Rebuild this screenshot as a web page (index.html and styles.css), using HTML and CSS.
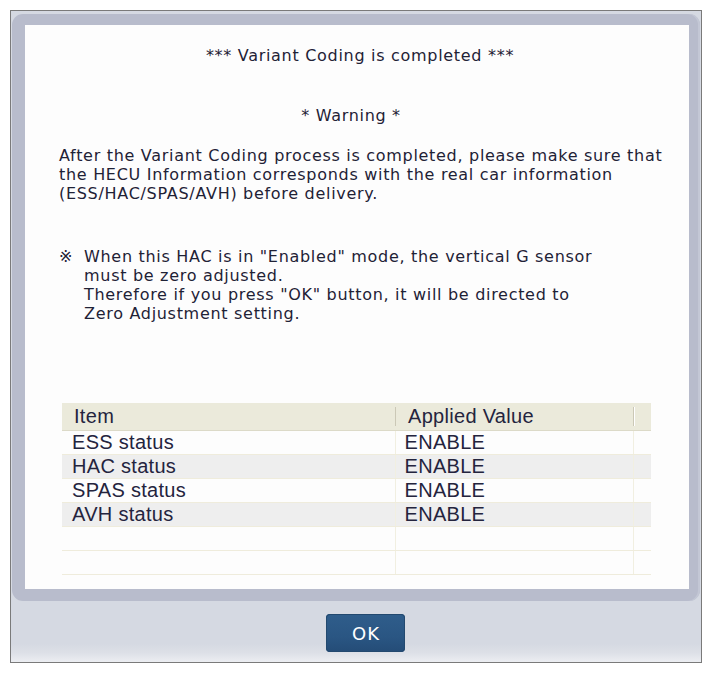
FILE: index.html
```html
<!DOCTYPE html>
<html>
<head>
<meta charset="utf-8">
<link rel="stylesheet" href="styles.css">
</head>
<body>
<div class="dialog">
  <div class="frame">
    <div class="panel">
      <div class="title">*** Variant Coding is completed ***</div>
      <div class="warning">* Warning *</div>
      <p class="para">After the Variant Coding process is completed, please make sure that<br>the HECU Information corresponds with the real car information<br>(ESS/HAC/SPAS/AVH) before delivery.</p>
      <div class="note">
        <span class="mark">※</span>
        <div class="note-text">When this HAC is in "Enabled" mode, the vertical G sensor<br>must be zero adjusted.<br>Therefore if you press "OK" button, it will be directed to<br>Zero Adjustment setting.</div>
      </div>
      <table class="grid">
        <colgroup><col class="w1"><col class="w2"><col class="w3"></colgroup>
        <thead>
          <tr><th class="c1">Item</th><th class="c2">Applied Value</th><th class="c3"></th></tr>
        </thead>
        <tbody>
          <tr><td class="c1">ESS status</td><td class="c2">ENABLE</td><td class="c3"></td></tr>
          <tr class="alt"><td class="c1">HAC status</td><td class="c2">ENABLE</td><td class="c3"></td></tr>
          <tr><td class="c1">SPAS status</td><td class="c2">ENABLE</td><td class="c3"></td></tr>
          <tr class="alt"><td class="c1">AVH status</td><td class="c2">ENABLE</td><td class="c3"></td></tr>
          <tr><td class="c1"></td><td class="c2"></td><td class="c3"></td></tr>
          <tr><td class="c1"></td><td class="c2"></td><td class="c3"></td></tr>
        </tbody>
      </table>
    </div>
  </div>
  <div class="footer">
    <button class="ok">OK</button>
  </div>
</div>
</body>
</html>
```

FILE: styles.css
```css
html, body {
  margin: 0;
  padding: 0;
  background: #ffffff;
}
.dialog {
  margin: 10px 0 0 10px;
  width: 690px;
  height: 651px;
  border: 1px solid #7a7a7a;
  background: #d5d9e2;
  display: flex;
  flex-direction: column;
}
.frame {
  margin: 3px 1px 0 1px;
  height: 587px;
  box-sizing: border-box;
  padding: 11px 11px 12px 13px;
  background: #b8bccc;
  border-radius: 11px;
  box-shadow: inset -2px 0 0 #c3c7d5;
}
.panel {
  background: #fdfdfd;
  height: 564px;
  box-sizing: border-box;
  padding: 21px 0 0 0;
  font-family: "DejaVu Sans", sans-serif;
  font-size: 16px;
  line-height: 19px;
  letter-spacing: 0.7px;
  color: #1f2236;
}
.title {
  text-align: center;
  padding-left: 6px;
}
.warning {
  margin-top: 41px;
  text-align: center;
  padding-right: 12px;
}
.para {
  margin: 21px 0 0 34px;
}
.note {
  margin: 44px 0 0 34px;
  display: flex;
}
.mark {
  width: 25px;
  flex: none;
  letter-spacing: 0;
}
.grid {
  margin: 80px 0 0 37px;
  width: 589px;
  border-collapse: collapse;
  table-layout: fixed;
  font-family: "Liberation Sans", Arial, sans-serif;
  font-size: 20px;
  letter-spacing: 0.3px;
  color: #24243e;
}
.w1 { width: 333px; }
.w2 { width: 238px; }
.w3 { width: 18px; }
.grid th, .grid td {
  box-sizing: border-box;
}
.grid th {
  height: 27px;
  padding: 0;
  background: #ebeadb;
  font-weight: normal;
  text-align: left;
  border-bottom: 1px solid #dcdac8;
  position: relative;
}
.grid th.c1 { padding-left: 12px; }
.grid th.c2 { padding-left: 13px; }
.grid th.c2::before, .grid th.c3::before {
  content: "";
  position: absolute;
  left: 0;
  top: 4px;
  bottom: 4px;
  width: 1px;
  background: #cbc8b6;
}
.grid th.c3::after {
  content: "";
  position: absolute;
  left: 1px;
  top: 4px;
  bottom: 4px;
  width: 1px;
  background: #ffffff;
}
.grid td {
  height: 24px;
  padding: 0;
  border-bottom: 1px solid #efecdc;
  line-height: 23px;
  white-space: nowrap;
}
.grid td.c1 { padding-left: 10px; }
.grid td.c2 { padding-left: 9px; border-left: 1px solid #f1efe1; }
.grid td.c3 { border-left: 1px solid #f1efe1; }
.grid tr.alt td { background: #eeeeee; }
.footer {
  flex: 1;
  display: flex;
  align-items: flex-start;
  padding: 13px 0 0 315px;
  background: linear-gradient(to bottom, #d5d9e2 0%, #d5d9e2 70%, #dde0e7 85%, #eceef2 100%);
}
.ok {
  width: 79px;
  height: 38px;
  border: none;
  border-radius: 4px;
  background: linear-gradient(to bottom, #2f5d8b 0%, #2a5683 60%, #244c77 100%);
  box-shadow: inset 0 0 0 1px #23496f;
  color: #ffffff;
  font-family: "DejaVu Sans", sans-serif;
  font-size: 18px;
  letter-spacing: 1px;
  text-indent: 1px;
  padding: 0;
}
```
